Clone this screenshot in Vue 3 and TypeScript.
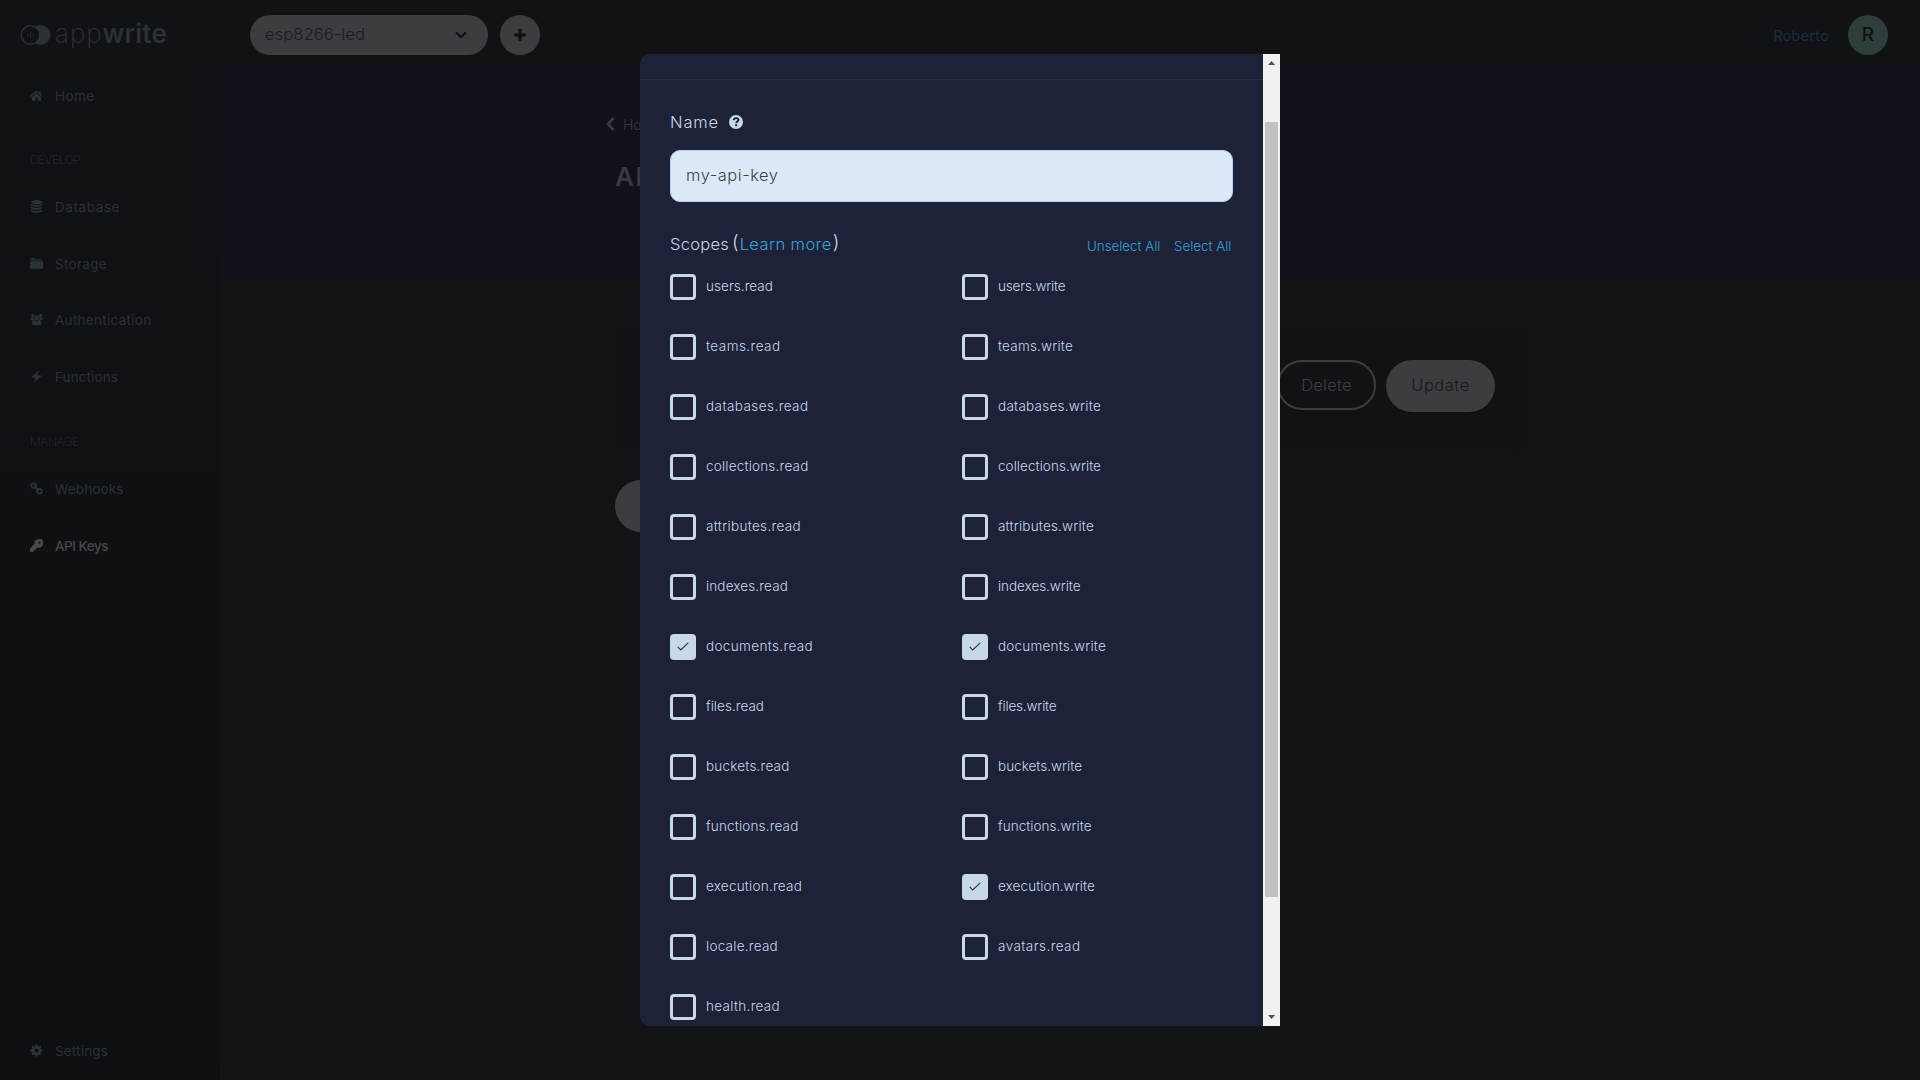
<script setup lang="ts">
interface NavItem {
  label: string
  icon: string
  width: number
  active?: boolean
}
interface Scope {
  name: string
  width: number
  checked: boolean
}

// Tracks a label so that it takes up exactly the given width.
const vFit = {
  mounted(el: HTMLElement, binding: { value: number }) {
    const count = (el.textContent ?? '').length
    const current = el.getBoundingClientRect().width
    el.style.letterSpacing = `${((binding.value - current) / count).toFixed(3)}px`
  },
}

const develop: NavItem[] = [
  { label: 'Database', icon: 'database', width: 65 },
  { label: 'Storage', icon: 'folder', width: 52 },
  { label: 'Authentication', icon: 'users', width: 96.5 },
  { label: 'Functions', icon: 'flash', width: 63 },
]
const manage: NavItem[] = [
  { label: 'Webhooks', icon: 'link', width: 68.5 },
  { label: 'API Keys', icon: 'key', width: 53, active: true },
]
const groups = [
  { title: 'Develop', width: 50, items: develop },
  { title: 'Manage', width: 49, items: manage },
]

const selected = ['documents.read', 'documents.write', 'execution.write']
const pairs: [string, number, number][] = [
  ['users', 67, 67.5],
  ['teams', 74.5, 75],
  ['databases', 102.5, 103],
  ['collections', 102.5, 103],
  ['attributes', 95, 96],
  ['indexes', 82, 82.5],
  ['documents', 107, 108],
  ['files', 58, 58.5],
  ['buckets', 83.5, 84],
  ['functions', 92.5, 93.5],
  ['execution', 96, 97],
]
const entries: [string, number][] = [
  ...pairs.flatMap(([r, read, write]): [string, number][] => [
    [`${r}.read`, read],
    [`${r}.write`, write],
  ]),
  ['locale.read', 72],
  ['avatars.read', 82.5],
  ['health.read', 74],
]
const scopes: Scope[] = entries.map(([name, width]) => ({
  name,
  width,
  checked: selected.includes(name),
}))
</script>

<template>
  <div class="page">
    <aside class="sidebar">
      <div class="logo">
        <svg width="31" height="22" viewBox="0 0 31 22">
          <circle cx="20.500" cy="11" r="10" fill="#2a3238" />
          <circle cx="10.500" cy="11" r="9.300" fill="#0f1115" stroke="#2a3238" stroke-width="1.500" />
          <path d="M8.800 9.200L7.200 11l1.600 1.800M11.200 8l-1 6M12.600 9.200l1.500 1.800-1.500 1.800" fill="none" stroke="#2a3238" stroke-width=".8" />
        </svg>
        <span class="word"><span v-fit="47.500" class="thin">app</span><b v-fit="64.500">write</b></span>
      </div>
      <div class="nav home">
        <svg class="ico" viewBox="0 0 13 13"><path d="M6.500 1.500L.2 7l.8.9L6.500 3.200 12 7.900l.8-.9-2-1.800V2H9.200v1.800zM2 8v3.700h3.300V8.800h2.400v2.900H11V8L6.500 4.200z" /></svg>
        <span v-fit="39.500">Home</span>
      </div>
      <template v-for="g in groups" :key="g.title">
        <div class="group"><span v-fit="g.width">{{ g.title }}</span></div>
        <div v-for="i in g.items" :key="i.label" class="nav" :class="{ active: i.active }">
          <svg class="ico" viewBox="0 0 13 13">
            <g v-if="i.icon === 'database'">
              <ellipse cx="6.500" cy="2.200" rx="5.700" ry="2.100" />
              <path d="M.8 3.700c1.700 1.900 9.700 1.900 11.400 0v1.400c0 2.300-11.400 2.300-11.400 0zM.8 6.600c1.700 1.900 9.700 1.900 11.400 0V8c0 2.300-11.400 2.300-11.400 0zM.8 9.500c1.700 1.900 9.700 1.900 11.400 0v1.300c0 2.700-11.400 2.700-11.400 0z" />
            </g>
            <path v-else-if="i.icon === 'folder'" d="M.7 1.700Q.7 1 1.400 1h3.200q.6 0 .7.700v.5h6q.8 0 .8.800v.4H.7zM0 4.200h13v6.600q0 1-1 1H1q-1 0-1-1z" />
            <g v-else-if="i.icon === 'users'">
              <circle cx="2.700" cy="2.500" r="1.700" /><circle cx="10.300" cy="2.500" r="1.700" />
              <circle cx="6.500" cy="4.700" r="2.500" />
              <path d="M.2 4.800q2-1 3.200-.2 0 2 1 2.700H1.200Q.2 7.300.2 4.800zM12.800 4.800q-2-1-3.200-.2 0 2-1 2.700h3.200q1 0 1-2.500zM4 7.200q2.500 1.600 5 0 2.200.3 2.200 3.700 0 1.300-1.300 1.300H3.100q-1.300 0-1.300-1.300 0-3.400 2.200-3.700z" />
            </g>
            <path v-else-if="i.icon === 'flash'" d="M9.500.1L1 7.300l4.700.7L3 12.900 12 5.700 7.300 5z" />
            <g v-else-if="i.icon === 'link'" class="line">
              <circle cx="3.700" cy="3.700" r="2.400" /><circle cx="9.300" cy="9.300" r="2.400" />
              <path d="M4.200 4.200l4.600 4.600" />
            </g>
            <path v-else fill-rule="evenodd" d="M8.500 0a4.200 4.200 0 0 0-4 4.800L0 9.700V13h3.300v-1.300h1.300v-1.400h1.300L7.500 8.600A4.200 4.200 0 0 0 13 4.500V2Q13 0 11 0zM9.500 2.600a1.100 1.100 0 1 1 0 2.200 1.100 1.100 0 0 1 0-2.200z" />
          </svg>
          <span v-fit="i.width">{{ i.label }}</span>
        </div>
      </template>
      <div class="nav settings">
        <svg class="ico" viewBox="0 0 13 13">
          <path fill-rule="evenodd" d="M5.500.5h2l.3 1.500 1 .4 1.300-.9 1.400 1.400-.9 1.300.4 1 1.500.3v2l-1.500.3-.4 1 .9 1.300-1.400 1.400-1.300-.9-1 .4-.3 1.500h-2L5.200 11l-1-.4-1.300.9-1.400-1.400.9-1.300-.4-1L.5 7.500v-2L2 5.200l.4-1-.9-1.300 1.400-1.400 1.300.9 1-.4zM6.500 4.500a2 2 0 1 0 0 4 2 2 0 0 0 0-4z" />
        </svg>
        <span v-fit="53">Settings</span>
      </div>
    </aside>

    <main class="main">
      <header class="header">
        <div class="project">
          <span v-fit="100">esp8266-led</span>
          <svg width="12" height="8" viewBox="0 0 12 8"><path d="M1 1.200l5 5 5-5" fill="none" stroke="#0f1014" stroke-width="2" /></svg>
        </div>
        <div class="add">
          <svg width="12" height="12" viewBox="0 0 12 12"><path d="M6 0v12M0 6h12" stroke="#0f1014" stroke-width="3.200" /></svg>
        </div>
        <span v-fit="55.500" class="user">Roberto</span>
        <div class="avatar">R</div>
      </header>
      <section class="hero">
        <div class="back">
          <svg width="9" height="14" viewBox="0 0 9 14"><path d="M7.500 1L2 7l5.500 6" fill="none" stroke="#393a40" stroke-width="2.800" /></svg>
          <span>Home</span>
        </div>
        <h1>API Keys</h1>
      </section>
      <section class="card">
        <div class="btn outline"><span v-fit="50.500">Delete</span></div>
        <div class="btn"><span v-fit="58.500">Update</span></div>
      </section>
      <div class="btn addkey"></div>
    </main>

    <div class="modal">
      <div class="body">
        <div class="top"></div>
        <label class="name">
          <span v-fit="49">Name</span>
          <svg width="14" height="14" viewBox="0 0 14 14">
            <circle cx="7" cy="7" r="7" fill="#c7d8eb" />
            <path d="M4.700 5.200C4.900 3.600 6 3.100 7.100 3.100c1.300 0 2.300.8 2.300 1.900 0 1.600-2.200 1.600-2.200 3.200" fill="none" stroke="#1d2239" stroke-width="1.900" />
            <rect x="6.100" y="9.300" width="2" height="2" fill="#1d2239" />
          </svg>
        </label>
        <div class="input"><span v-fit="92.500">my-api-key</span></div>
        <div class="scopes-head">
          <div class="label"><span v-fit="59">Scopes</span><span class="par open">(</span><a v-fit="92">Learn more</a><span class="par close">)</span></div>
          <div class="actions"><a v-fit="73.500">Unselect All</a><a v-fit="57.500">Select All</a></div>
        </div>
        <div class="grid">
          <div v-for="s in scopes" :key="s.name" class="scope">
            <span class="box" :class="{ on: s.checked }">
              <svg v-if="s.checked" width="12" height="9" viewBox="0 0 12 9"><path d="M.7 4.900L3.800 8 11.200.9" fill="none" stroke="#33304a" stroke-width="1.200" /></svg>
            </span>
            <span v-fit="s.width">{{ s.name }}</span>
          </div>
        </div>
      </div>
      <div class="track">
        <svg width="7" height="4" viewBox="0 0 7 4"><path d="M0 4L3.500 0 7 4z" fill="#505050" /></svg>
        <div class="thumb"></div>
        <svg width="7" height="4" viewBox="0 0 7 4"><path d="M0 0l3.500 4L7 0z" fill="#505050" /></svg>
      </div>
    </div>
  </div>
</template>

<style>
body { margin: 0; background: #121317; overflow: hidden; }
</style>

<style scoped>
.page {
  display: flex;
  position: relative;
  width: 1920px;
  height: 1080px;
  background: #121317;
  font-family: Inter, "Open Sans", "Liberation Sans", sans-serif;
  font-weight: 300;
  overflow: hidden;
}
* { box-sizing: border-box; }
span, a, b { white-space: nowrap; }
.sidebar {
  display: flex;
  flex-direction: column;
  width: 220px;
  height: 1080px;
  background: linear-gradient(#111216, #0f1014 50%, #0e0f13);
  color: #283238;
}
.logo { display: flex; align-items: center; height: 70px; padding-left: 19.500px; }
.word { margin-left: 4.500px; font-size: 26px; line-height: 30px; margin-top: -3px; color: #2a3238; }
.thin { font-weight: 200; }
.word b { font-weight: 600; }
.nav {
  display: flex;
  align-items: center;
  flex: none;
  height: 56.500px;
  padding-left: 30px;
  font-size: 13.500px;
  font-weight: 400;
}
.nav span { margin-left: 12px; }
.ico { width: 13px; height: 13px; fill: currentColor; margin-top: -1px; }
.line { fill: none; stroke: currentColor; stroke-width: 1.800; }
.nav.active { color: #47484b; font-weight: 500; }
.home { height: 53px; padding-bottom: 1px; }
.group {
  flex: none;
  height: 56px;
  padding: 28.500px 0 0 30px;
  font-size: 12px;
  line-height: 16px;
  text-transform: uppercase;
  color: #1f262a;
}
.settings { margin: auto 0 1px; }
.main { width: 1700px; }
.header { display: flex; align-items: center; height: 70px; padding: 0 32px 0 30px; background: #111216; }
.project {
  display: flex;
  align-items: center;
  justify-content: space-between;
  width: 238px;
  height: 40px;
  padding: 0 21px 0 15px;
  border-radius: 20px;
  background: #3b3d41;
  color: #1a1c21;
  font-size: 16.500px;
}
.project span { margin-top: -2px; }
.add { display: grid; place-items: center; width: 40px; height: 40px; margin-left: 12px; border-radius: 50%; background: #3b3d41; }
.user { margin-left: auto; font-size: 14px; color: #1a303b; font-weight: 400; }
.avatar {
  width: 40px;
  height: 40px;
  margin-left: 19px;
  border-radius: 50%;
  background: #2e3e3c;
  color: #101216;
  font-size: 19px;
  font-weight: 500;
  line-height: 40px;
  text-align: center;
}
.hero { height: 209px; padding: 43px 0 0 386px; background: #11111a; color: #393a40; }
.back { display: flex; align-items: center; gap: 8px; height: 22px; font-size: 14px; }
h1 { margin: 25px 0 0 9px; font-size: 26px; line-height: 34px; font-weight: 600; letter-spacing: 1.500px; }
.card {
  display: flex;
  justify-content: flex-end;
  gap: 10px;
  width: 911px;
  height: 120px;
  margin: 51px 0 0 395px;
  padding: 30px 31px 0 0;
  border-radius: 10px;
  background: #111216;
}
.btn {
  width: 109px;
  height: 52px;
  border-radius: 26px;
  background: #3b3d41;
  color: #17191d;
  font-size: 16.500px;
  line-height: 50px;
  text-align: center;
}
.outline { width: 99px; height: 50px; border: 2px solid #3b3d41; background: none; color: #3b3d41; line-height: 46px; }
.addkey { width: 150px; margin: 30px 0 0 395px; }
.modal {
  position: absolute;
  top: 54px;
  left: 640px;
  display: flex;
  width: 640px;
  height: 972px;
  overflow: hidden;
  border-radius: 10px 0 0 10px;
  background: #1d2239;
  color: #c7d8eb;
}
.body { width: 623px; padding: 0 30px; }
.top { height: 26px; margin: 0 -30px; border-bottom: 1px solid #262d50; }
.name { display: flex; align-items: center; gap: 10px; height: 20px; margin-top: 32px; font-size: 16.500px; }
.name svg { margin-top: -1px; }
.input {
  height: 52px;
  margin-top: 18px;
  padding-left: 15px;
  border: 1px solid #aed2f8;
  border-radius: 10px;
  background: #dce8f5;
  color: #3e4048;
  font-size: 16.500px;
  line-height: 49px;
}
.scopes-head { display: flex; align-items: center; justify-content: space-between; height: 24px; margin-top: 30px; }
.label { display: flex; font-size: 16.500px; line-height: 24px; }
.par { font-size: 19px; line-height: 22px; }
.open { margin: 0 1px 0 3px; }
.close { margin-left: 1px; }
a { color: #3aa2d8; }
.actions { display: flex; gap: 13.500px; padding: 3px 1.500px 0 0; font-size: 13.300px; }
.grid { display: grid; grid-template-columns: 292px 1fr; grid-auto-rows: 60px; margin-top: 18px; }
.scope { display: flex; gap: 10px; align-items: flex-start; font-size: 13.500px; line-height: 25px; }
.box { display: grid; place-items: center; width: 26px; height: 26px; border: 3px solid #c7d8eb; border-radius: 4px; }
.box svg { margin: -2px 0 0; }
.on { background: #c7d8eb; }
.track {
  display: flex;
  flex-direction: column;
  align-items: center;
  width: 17px;
  padding: 7px 0;
  background: #f1f1f1;
}
.thumb { width: 13px; height: 775px; margin: 57px 0 auto; background: #c1c1c1; }
</style>
